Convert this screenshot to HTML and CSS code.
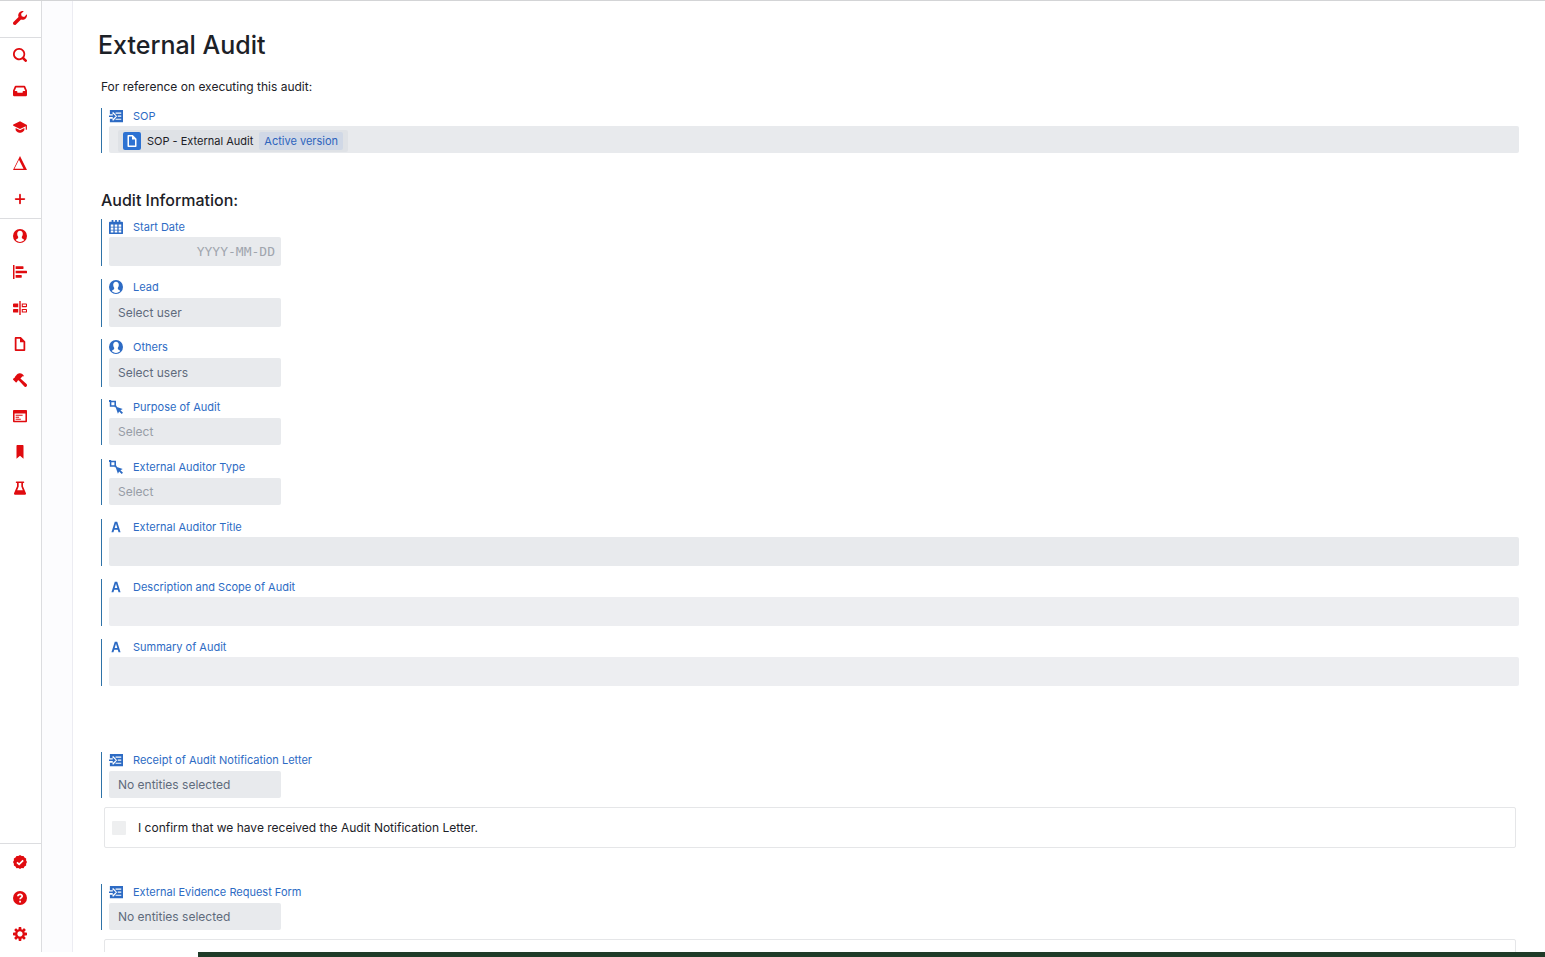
FILE: index.html
```html
<!DOCTYPE html>
<html lang="en">
<head>
  <meta charset="UTF-8" />
  <meta name="viewport" content="width=device-width, initial-scale=1.0"/>
  <title>External Audit</title>
  <link rel="stylesheet" href="styles.css">
</head>
<body>

  <!-- ICONS -->
  <svg class="sprite" aria-hidden="true">
    <symbol id="i-wrench" viewBox="0 0 16 16"><path d="M15.83 3.7l-3.06 3.05-2.84-.7-.7-2.83L12.29.17a5.004 5.004 0 00-4.83 1.29 4.967 4.967 0 00-1.12 5.36L.58 12.58c-.36.36-.58.86-.58 1.41 0 1.1.9 2 2 2 .55 0 1.05-.22 1.41-.59l5.77-5.77c1.79.69 3.91.35 5.35-1.12 1.32-1.3 1.74-3.15 1.3-4.81z"/></symbol>
    <symbol id="i-search" viewBox="0 0 16 16"><path d="M15.55 13.43l-2.67-2.68a6.94 6.94 0 001.11-3.76c0-3.87-3.13-7-7-7s-7 3.13-7 7 3.13 7 7 7c1.39 0 2.68-.42 3.76-1.11l2.68 2.67a1.498 1.498 0 102.12-2.12zm-8.56-1.44c-2.76 0-5-2.24-5-5s2.24-5 5-5 5 2.24 5 5-2.24 5-5 5z"/></symbol>
    <symbol id="i-inbox" viewBox="0 0 16 16"><path d="M13.91 2.6c-.16-.36-.51-.61-.92-.61h-10c-.41 0-.77.25-.92.61L0 7.45v5.54c0 .55.45 1 1 1h14c.55 0 1-.45 1-1V7.45L13.91 2.6zm-1.92 5.39c-.55 0-1 .45-1 1v1h-6v-1c0-.55-.45-1-1-1H1.94l1.71-4h8.68l1.71 4h-2.05z"/></symbol>
    <symbol id="i-learning" viewBox="0 0 16 16"><path d="M8 1.5L.4 5.2c-.5.3-.5 1 0 1.3L8 10.2l6.5-3.1v3.4a.7.7 0 001.4 0V5.7z"/><path d="M3 9.2V11c0 1.500 2.800 3.600 5 3.600s5-2.100 5-3.600V9.200l-5 2.500z"/></symbol>
    <symbol id="i-delta" viewBox="0 0 16 16"><path fill-rule="evenodd" d="M8 0L0 16h16zM6.800 4.200L12 14.700H1.700z"/></symbol>
    <symbol id="i-plus" viewBox="0 0 16 16"><path d="M13 7H9V3c0-.55-.45-1-1-1s-1 .45-1 1v4H3c-.55 0-1 .45-1 1s.45 1 1 1h4v4c0 .55.45 1 1 1s1-.45 1-1V9h4c.55 0 1-.45 1-1s-.45-1-1-1z"/></symbol>
    <symbol id="i-user" viewBox="0 0 16 16"><path fill-rule="evenodd" d="M8 0a8 8 0 100 16A8 8 0 008 0zM8 2c2 0 3.300 1.500 3.200 3.600 0 1.300-.4 2.400-1.100 3.200v1.500c.4.800 2.500 1.200 2.800 2.400C11.800 14 10 14.800 8 14.800s-3.800-.8-4.900-2.100c.3-1.200 2.400-1.600 2.800-2.400V8.800c-.7-.8-1.100-1.900-1.100-3.200C4.700 3.500 6 2 8 2z"/></symbol>
    <symbol id="i-gantt" viewBox="0 0 16 16"><path d="M0 0h1.700v16H0zM3 1.500h8.500a.5.5 0 01.5.5v2a.5.5 0 01-.5.5H3zM3 6.500h12.500a.5.5 0 01.5.5v2a.5.5 0 01-.5.5H3zM3 11.500h6.500a.5.5 0 01.5.5v2a.5.5 0 01-.5.5H3z"/></symbol>
    <symbol id="i-compare" viewBox="0 0 16 16"><path fill-rule="evenodd" d="M7.200 0h1.600v16H7.200zM1 2.800h5v4.200H1a1 1 0 01-1-1V3.800a1 1 0 011-1zM1 9h5v4.200H1a1 1 0 01-1-1V10a1 1 0 011-1zM10 2.800h5a1 1 0 011 1V6a1 1 0 01-1 1h-5zm1.200 1.200v1.800h3.600V4zM10 9h5a1 1 0 011 1v2.200a1 1 0 01-1 1h-5zm1.200 1.200V12h3.600v-1.800z"/></symbol>
    <symbol id="i-document" viewBox="0 0 16 16"><path d="M9 0H3c-.55 0-1 .45-1 1v14c0 .55.45 1 1 1h10c.55 0 1-.45 1-1V5L9 0zm3 14H4V2h4v4h4v8z"/></symbol>
    <symbol id="i-hammer" viewBox="0 0 16 16"><path d="M15.500 12.700L8.500 6.200l1.600-1.700c.7-.6 1.400-.7 2.600-.7C11.500 1.500 9.600.1 7.500.3 6 .4 5 1.200 4 2.200L2.500 4c-.4.4-.3 1-.6 1.400-.3.300-.8.2-1.100.5L.2 6.600c-.3.3-.3.700 0 1l2.900 3c.3.300.7.300 1 0l.6-.7c.3-.3.200-.9.500-1.100l1.200-.4 6.600 7.100c.7.700 1.700.7 2.400 0 .8-.8.8-2.100.1-2.800z"/></symbol>
    <symbol id="i-form" viewBox="0 0 16 16"><path fill-rule="evenodd" d="M1 1h14a1 1 0 011 1v12a1 1 0 01-1 1H1a1 1 0 01-1-1V2a1 1 0 011-1zm.8 4v8.300h12.400V5zM3 6.500h8v1.200H3zM3 8.800h4V10H3zM3 11h6v1.200H3z"/></symbol>
    <symbol id="i-bookmark" viewBox="0 0 16 16"><path d="M4.800 0h6.400c.5 0 .8.400.8.800v15L8 12.200 4 15.800V.8c0-.4.400-.8.800-.8z"/></symbol>
    <symbol id="i-flask" viewBox="0 0 16 16"><path fill-rule="evenodd" d="M4 .5h8a.8.8 0 010 1.700h-.6V6l3.300 7.800c.5 1.200 0 2-1 2H2.300c-1 0-1.500-.8-1-2L4.600 6V2.200H4A.8.8 0 014 .5zM6.500 2.200v4.100L4.800 10.500h6.400L9.500 6.300V2.200z"/></symbol>
    <symbol id="i-badge" viewBox="0 0 16 16"><path d="M8 0l1.900 1.100L12 1l1.100 1.900 1.900 1.100v2.200L16 8l-1 1.900V12l-1.900 1.100L12 15l-2.100-.1L8 16l-1.900-1.100L4 15l-1.100-1.900L1 12V9.900L0 8l1-1.800V4l1.900-1.100L4 1l2.100.1z"/><path class="cut" d="M4.500 8.300L7 10.700l4.600-4.600"/></symbol>
    <symbol id="i-help" viewBox="0 0 16 16"><circle cx="8" cy="8" r="8"/><path class="cut" d="M5.600 6c0-3 5-2.800 4.900 0C10.400 7.600 8.200 7.600 8.100 9.500M8.100 11v2"/></symbol>
    <symbol id="i-cog" viewBox="0 0 16 16"><path d="M15.19 6.39h-1.85c-.11-.37-.27-.71-.45-1.04l1.36-1.36c.31-.31.31-.82 0-1.13l-1.13-1.13a.803.803 0 00-1.13 0l-1.36 1.36c-.33-.17-.67-.33-1.04-.44V.79c0-.44-.36-.8-.8-.8h-1.6c-.44 0-.8.36-.8.8v1.86c-.39.12-.75.28-1.1.47l-1.3-1.3c-.3-.3-.79-.3-1.09 0L1.82 2.91c-.3.3-.3.79 0 1.09l1.3 1.3c-.2.34-.36.7-.48 1.09H.79c-.44 0-.8.36-.8.8v1.6c0 .44.36.8.8.8h1.85c.11.37.27.71.45 1.04l-1.36 1.36c-.31.31-.31.82 0 1.13l1.13 1.13c.31.31.82.31 1.13 0l1.36-1.36c.33.18.67.33 1.04.44v1.86c0 .44.36.8.8.8h1.6c.44 0 .8-.36.8-.8v-1.86c.39-.12.75-.28 1.1-.47l1.3 1.3c.3.3.79.3 1.09 0l1.09-1.09c.3-.3.3-.79 0-1.09l-1.3-1.3c.19-.35.36-.71.48-1.1h1.85c.44 0 .8-.36.8-.8v-1.6a.816.816 0 00-.81-.79zm-7.2 4.6c-1.66 0-3-1.34-3-3s1.34-3 3-3 3 1.34 3 3-1.34 3-3 3z"/></symbol>
    <symbol id="i-entity" viewBox="0 0 16 16"><path fill-rule="evenodd" d="M1 1h15v14H1v-4h3v2.200h1.200L9.200 8.200 5.200 3.600H4V6H1zM7.500 4v1.400H14V4zM10 7.500v1.400h4V7.500zM7.500 11v1.400H14V11z"/><path d="M0 7.300h4.300V5L7.800 8.200l-3.500 3.200V9.100H0z"/></symbol>
    <symbol id="i-calendar" viewBox="0 0 16 16"><path fill-rule="evenodd" d="M3 0h2v2h2V0h2v2h2V0h2v2h2a1 1 0 011 1v12a1 1 0 01-1 1H1a1 1 0 01-1-1V3a1 1 0 011-1h2zM2 5v2.600h3V5zm4.500 0v2.600h3V5zM11 5v2.600h3V5zM2 8.600V11h3V8.600zm4.500 0V11h3V8.600zm4.500 0V11h3V8.600zM2 12v2.400h3V12zm4.500 0v2.400h3V12zm4.500 0v2.400h3V12z"/></symbol>
    <symbol id="i-select" viewBox="0 0 16 16"><path fill-rule="evenodd" d="M0 0h2.500v.8H8v5.700h.8v1.700H6.500v-.4H.9V2.300H0zm2.700 2.600V6h3.500V2.600z"/><path d="M7.300 7.300l8.400 2.900-2.600 1.400 2.900 2.900-1.500 1.500-2.900-2.900-1.400 2.600z"/></symbol>
    <symbol id="i-text" viewBox="0 0 16 16"><path fill-rule="evenodd" d="M6.600 2h2.800L13.200 14h-2.300l-.9-2.900H6L5.100 14H2.800zm-.1 7.200h3L8 4.300z"/></symbol>
  </svg>

  <div class="app">
    <!-- SIDEBAR -->
    <nav class="sidebar">
      <div class="nav-group">
        <button class="nav-btn" aria-label="Tools"><svg><use href="#i-wrench"/></svg></button>
      </div>
      <div class="nav-group">
        <button class="nav-btn" aria-label="Search"><svg><use href="#i-search"/></svg></button>
        <button class="nav-btn" aria-label="Inbox"><svg><use href="#i-inbox"/></svg></button>
        <button class="nav-btn" aria-label="Training"><svg><use href="#i-learning"/></svg></button>
        <button class="nav-btn" aria-label="Changes"><svg><use href="#i-delta"/></svg></button>
        <button class="nav-btn" aria-label="Add"><svg><use href="#i-plus"/></svg></button>
      </div>
      <div class="nav-group nav-main">
        <button class="nav-btn" aria-label="Users"><svg><use href="#i-user"/></svg></button>
        <button class="nav-btn" aria-label="Timeline"><svg><use href="#i-gantt"/></svg></button>
        <button class="nav-btn" aria-label="Compare"><svg><use href="#i-compare"/></svg></button>
        <button class="nav-btn" aria-label="Documents"><svg><use href="#i-document"/></svg></button>
        <button class="nav-btn" aria-label="Build"><svg><use href="#i-hammer"/></svg></button>
        <button class="nav-btn" aria-label="Forms"><svg><use href="#i-form"/></svg></button>
        <button class="nav-btn" aria-label="Bookmarks"><svg><use href="#i-bookmark"/></svg></button>
        <button class="nav-btn" aria-label="Tests"><svg><use href="#i-flask"/></svg></button>
      </div>
      <div class="nav-group nav-footer">
        <button class="nav-btn" aria-label="Approvals"><svg><use href="#i-badge"/></svg></button>
        <button class="nav-btn" aria-label="Help"><svg><use href="#i-help"/></svg></button>
        <button class="nav-btn" aria-label="Settings"><svg><use href="#i-cog"/></svg></button>
      </div>
    </nav>

    <div class="gutter"></div>

    <!-- FORM -->
    <main class="page">
      <h1>External Audit</h1>

      <form class="form">
        <p class="intro">For reference on executing this audit:</p>
        <div class="field">
          <div class="field-label"><svg><use href="#i-entity"/></svg><span>SOP</span></div>
          <div class="control entity-list">
            <a class="entity" href="#sop">
              <span class="entity-icon"><svg><use href="#i-document"/></svg></span>
              <span>SOP - External Audit</span>
              <span class="version">Active version</span>
            </a>
          </div>
        </div>

        <h2>Audit Information:</h2>
        <div class="fields">
          <div class="field">
            <label class="field-label" for="start"><svg><use href="#i-calendar"/></svg><span>Start Date</span></label>
            <input class="control short date" id="start" type="text" placeholder="YYYY-MM-DD">
          </div>
          <div class="field pick">
            <label class="field-label" for="lead"><svg><use href="#i-user"/></svg><span>Lead</span></label>
            <input class="control short" id="lead" type="text" placeholder="Select user">
          </div>
          <div class="field pick">
            <label class="field-label" for="others"><svg><use href="#i-user"/></svg><span>Others</span></label>
            <input class="control short" id="others" type="text" placeholder="Select users">
          </div>
          <div class="field pick">
            <label class="field-label" for="purpose"><svg><use href="#i-select"/></svg><span>Purpose of Audit</span></label>
            <select class="control short low" id="purpose"><option>Select</option></select>
          </div>
          <div class="field pick">
            <label class="field-label" for="type"><svg><use href="#i-select"/></svg><span>External Auditor Type</span></label>
            <select class="control short low" id="type"><option>Select</option></select>
          </div>
          <div class="field">
            <label class="field-label" for="title"><svg><use href="#i-text"/></svg><span>External Auditor Title</span></label>
            <input class="control" id="title" type="text">
          </div>
          <div class="field">
            <label class="field-label" for="scope"><svg><use href="#i-text"/></svg><span>Description and Scope of Audit</span></label>
            <input class="control pale" id="scope" type="text">
          </div>
          <div class="field">
            <label class="field-label" for="summary"><svg><use href="#i-text"/></svg><span>Summary of Audit</span></label>
            <input class="control pale" id="summary" type="text">
          </div>
        </div>

        <section class="evidence">
          <div class="field pick">
            <label class="field-label" for="receipt"><svg><use href="#i-entity"/></svg><span>Receipt of Audit Notification Letter</span></label>
            <button class="control short low" id="receipt" type="button">No entities selected</button>
          </div>
          <label class="confirm"><input type="checkbox"><span>I confirm that we have received the Audit Notification Letter.</span></label>
        </section>

        <section class="evidence">
          <div class="field pick">
            <label class="field-label" for="request"><svg><use href="#i-entity"/></svg><span>External Evidence Request Form</span></label>
            <button class="control short low" id="request" type="button">No entities selected</button>
          </div>
          <div class="confirm"></div>
        </section>
      </form>
    </main>
  </div>

  <footer class="bottom-bar"></footer>

</body>
</html>
```
FILE: styles.css
```css
* {
  box-sizing: border-box;
}

body {
  margin: 0;
  height: 100vh;
  display: flex;
  flex-direction: column;
  overflow: hidden;
  background: #fff;
  color: #1c2127;
  font-family: Inter, "Liberation Sans", sans-serif;
  font-size: 12px;
}

button, input, select {
  font: inherit;
  color: inherit;
  border: none;
  margin: 0;
}

.sprite {
  display: none;
}

svg {
  width: 14px;
  height: 14px;
  fill: currentColor;
  flex: none;
}

.cut {
  fill: none;
  stroke: #fff;
  stroke-width: 2;
}

.app {
  flex: 1;
  min-height: 0;
  display: flex;
  border-top: 1px solid #d3d4d6;
}

/* sidebar */
.sidebar {
  width: 42px;
  flex: none;
  display: flex;
  flex-direction: column;
  border-right: 1px solid #dcdde0;
}

.nav-group + .nav-group {
  border-top: 1px solid #dcdde0;
}

.nav-main {
  flex: 1;
}

.nav-btn {
  display: flex;
  align-items: center;
  justify-content: center;
  width: 40px;
  height: 36px;
  padding: 0 0 2px;
  background: none;
  color: #e00b0f;
  cursor: pointer;
}

.nav-footer .nav-btn {
  padding: 0;
}

.gutter {
  width: 31px;
  flex: none;
  background: #fcfcfe;
  border-right: 1px solid #ececf2;
}

/* page */
.page {
  flex: 1;
  min-width: 0;
  overflow: hidden;
  padding: 28px 26px 0 25px;
}

h1 {
  margin: 0;
  font-size: 25px;
  line-height: 32px;
  font-weight: 500;
}

.form {
  padding-left: 3px;
}

.intro {
  margin: 16px 0 12px;
  line-height: 19px;
}

h2 {
  margin: 36px 0 8px;
  font-size: 16px;
  line-height: 22px;
  font-weight: 500;
}

.fields {
  display: grid;
  grid-auto-rows: 48px;
  gap: 12px;
  align-items: start;
}

.field {
  display: flex;
  flex-direction: column;
  border-left: 1px solid #2f73a8;
  padding-left: 7px;
}

.field-label {
  display: flex;
  align-items: center;
  gap: 10px;
  height: 16px;
  margin-bottom: 2px;
  color: #2d6bc4;
  font-size: 11px;
}

.pick .field-label {
  height: 15px;
  margin-bottom: 4px;
}

.control {
  display: block;
  width: 100%;
  height: 29px;
  padding: 0 9px 1px;
  border-radius: 2px;
  background: #e8eaed;
  color: #5f6b7c;
  text-align: left;
  appearance: none;
}

.pale {
  background: #edeef1;
}

.short {
  width: 172px;
}

.low {
  height: 27px;
}

select.control {
  color: #979da6;
}

.control::placeholder {
  color: #5f6b7c;
  opacity: 1;
}

.date {
  padding: 0 6px 0 9px;
  text-align: right;
  font-family: "DejaVu Sans Mono", monospace;
  font-size: 13px;
}

.date::placeholder {
  color: #a0a5ad;
}

.entity-list {
  display: flex;
  align-items: center;
  height: 27px;
  padding: 2px 9px 0;
}

.entity {
  display: flex;
  align-items: center;
  gap: 6px;
  height: 22px;
  padding: 0 5px;
  border-radius: 2px;
  background: #dfe2e6;
  color: #1c2127;
  font-size: 11px;
  text-decoration: none;
}

.entity-icon {
  display: flex;
  align-items: center;
  justify-content: center;
  width: 18px;
  height: 18px;
  border-radius: 2px;
  background: #2d72d2;
  color: #fff;
}

.entity-icon svg {
  width: 12px;
  height: 12px;
}

.version {
  padding: 0 5px;
  line-height: 18px;
  border-radius: 2px;
  background: #d0d8e6;
  color: #2d64bd;
}

.evidence {
  margin-top: 36px;
}

.fields + .evidence {
  margin-top: 65px;
}

.confirm {
  display: flex;
  align-items: center;
  gap: 12px;
  height: 41px;
  margin: 9px 3px 0;
  padding: 0 7px;
  border: 1px solid #e5e6e8;
  border-radius: 2px;
}

.confirm input {
  width: 14px;
  height: 14px;
  appearance: none;
  background: #eeeff0;
  border-radius: 1px;
}

.bottom-bar {
  height: 5px;
  flex: none;
  margin-left: 198px;
  background: #1f3b28;
}
```
